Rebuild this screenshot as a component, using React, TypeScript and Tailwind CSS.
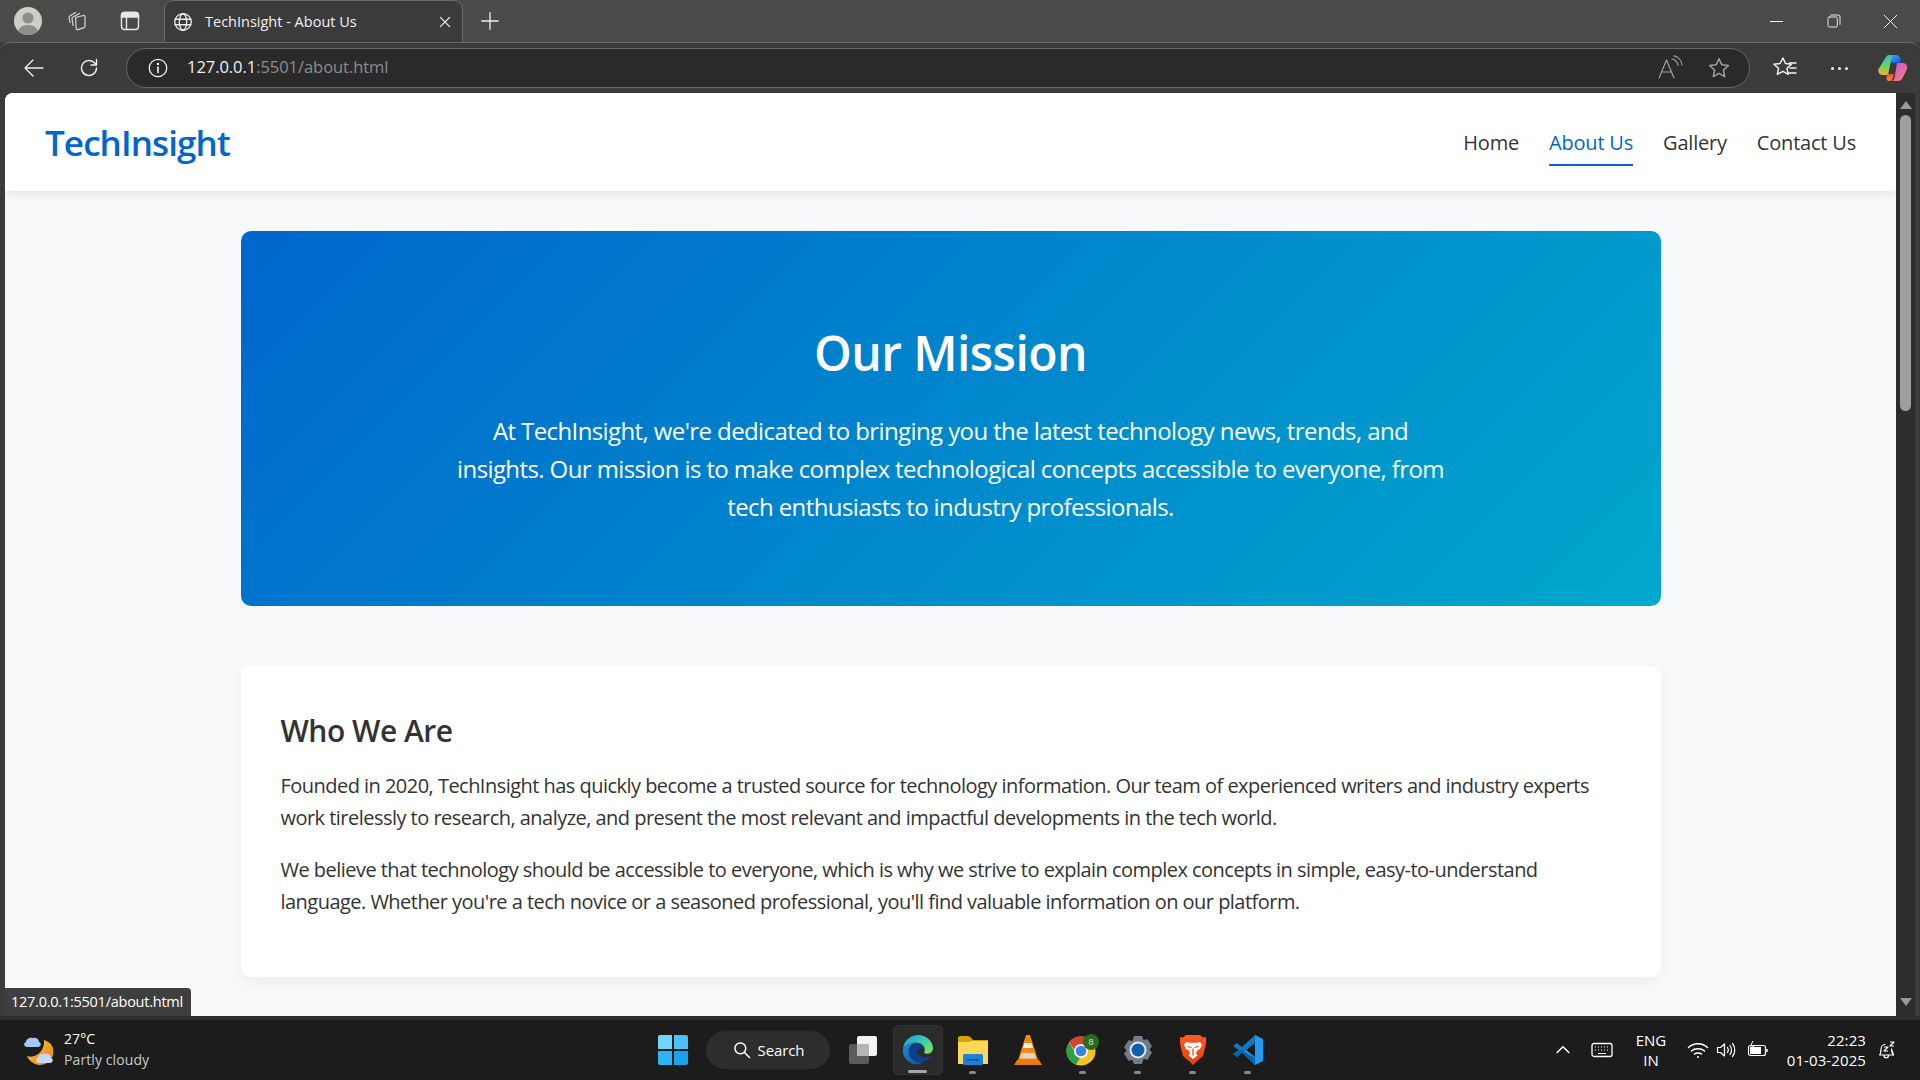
import { ReactNode } from "react";

const font = "[font-family:'Open_Sans','Noto_Sans',sans-serif]";

function Stroke({ size = 24, children, className = "" }: { size?: number; children: ReactNode; className?: string }) {
  return (
    <svg width={size} height={size} viewBox="0 0 24 24" fill="none" stroke="currentColor" strokeWidth="1.4" strokeLinecap="round" strokeLinejoin="round" className={className}>
      {children}
    </svg>
  );
}

function TabStrip() {
  return (
    <div className="flex h-[42px] items-center bg-[#4b4a48] text-[#f1f1f1]">
      <div className="ml-[14px] flex h-[28px] w-[28px] items-center justify-center overflow-hidden rounded-full bg-[#cfcdc8]">
        <svg width="28" height="28" viewBox="0 0 28 28">
          <circle cx="14" cy="11" r="5.5" fill="#8f8d89" />
          <path d="M3 28c1-8 6-10 11-10s10 2 11 10z" fill="#8f8d89" />
        </svg>
      </div>
      <div className="ml-[21px] flex w-[28px] justify-center text-[#d8d8d8]">
        <svg width="22" height="22" viewBox="0 0 22 22" fill="none" stroke="currentColor" strokeWidth="1.200" strokeLinejoin="round" strokeLinecap="round">
          <path d="M9.500 7.500 17.500 5.500c.8-.2 1.500.3 1.500 1.200v9.500c0 .7-.4 1.200-1 1.400l-6 2c-1 .3-1.800-.3-1.800-1.300z" />
          <path d="M7 15.500 6 8.500c-.1-.7.3-1.300 1-1.500L13.500 3.500" />
          <path d="M4 12.500 3 7.500c-.1-.7.2-1.200.8-1.500L9.500 2.500" />
        </svg>
      </div>
      <div className="ml-[25px] flex w-[28px] justify-center text-[#e8e8e8]">
        <svg width="22" height="22" viewBox="0 0 22 22" fill="none" stroke="currentColor" strokeWidth="1.400">
          <rect x="2.500" y="2.500" width="17" height="17" rx="3" />
          <path d="M2.500 7h17V5.500a3 3 0 0 0-3-3h-11a3 3 0 0 0-3 3z" fill="currentColor" />
          <path d="M7.500 7v12.500" />
        </svg>
      </div>
      <div className="ml-[20px] flex h-[42px] w-[299px] items-center self-end rounded-t-[9px] border border-b-0 border-[#6a6967] bg-[#3b3b3b] pl-[7px] pr-[9px]">
        <Stroke size={22}>
          <circle cx="12" cy="12" r="9" />
          <ellipse cx="12" cy="12" rx="4" ry="9" />
          <path d="M3.500 9h17M3.500 15h17" />
        </Stroke>
        <span className={`ml-[11px] flex-1 text-[14.500px] ${font}`}>TechInsight - About Us</span>
        <Stroke size={16}>
          <path d="M5 5l14 14M19 5 5 19" strokeWidth="1.800" />
        </Stroke>
      </div>
      <div className="ml-[16px]">
        <Stroke size={22}>
          <path d="M12 3v18M3 12h18" />
        </Stroke>
      </div>
      <div className="ml-auto flex items-center">
        <div className="flex w-[57px] justify-center">
          <div className="h-px w-[13px] bg-[#f1f1f1]" />
        </div>
        <div className="flex w-[57px] justify-center">
          <Stroke size={16}>
            <rect x="3" y="6" width="14" height="15" rx="2" />
            <path d="M7 3h11a3 3 0 0 1 3 3v11" />
          </Stroke>
        </div>
        <div className="mr-[1px] flex w-[57px] justify-center">
          <Stroke size={17}>
            <path d="M3 3l18 18M21 3 3 21" />
          </Stroke>
        </div>
      </div>
    </div>
  );
}

function Copilot() {
  return (
    <svg width="32" height="32" viewBox="0 0 32 32">
      <defs>
        <linearGradient id="cpa" x1="0" y1="0" x2="1" y2="1">
          <stop offset="0" stopColor="#1cc7dc" />
          <stop offset="0.550" stopColor="#2a7df0" />
          <stop offset="1" stopColor="#1a3fc4" />
        </linearGradient>
        <linearGradient id="cpb" x1="0" y1="0" x2="1" y2="1">
          <stop offset="0" stopColor="#a95ef0" />
          <stop offset="0.600" stopColor="#f0689a" />
          <stop offset="1" stopColor="#ff9a5a" />
        </linearGradient>
        <linearGradient id="cpc" x1="0" y1="0" x2="0" y2="1">
          <stop offset="0" stopColor="#2fc4c8" />
          <stop offset="0.550" stopColor="#67d45c" />
          <stop offset="1" stopColor="#f6b32c" />
        </linearGradient>
        <linearGradient id="cpd" x1="0" y1="0" x2="0" y2="1">
          <stop offset="0" stopColor="#e8542c" />
          <stop offset="1" stopColor="#f58a3c" />
        </linearGradient>
      </defs>
      <path d="M11 3h8c2 0 3.500 1 4 3l1.500 5H15z" fill="url(#cpa)" />
      <path d="M9 5c1-1.500 2-2 3-2 2 0 3 1.500 2.500 3.500L11 23H6c-3.500 0-5.500-3-4.500-6z" fill="url(#cpc)" />
      <path d="M10 22h7l-1 3c-.5 2-2 4-4 4-1.500 0-2.500-1-2.500-3z" fill="url(#cpd)" />
      <path d="M20 11h6c3 0 5 3 4 6l-3.500 7c-1 3-3 5-6 5h-7c2 0 3.500-1 4-3z" fill="url(#cpb)" />
    </svg>
  );
}

function Toolbar() {
  return (
    <div className="flex h-[51px] items-center rounded-t-[10px] border-t border-[#6a6967] bg-[#3b3b3b] text-[#f1f1f1]">
      <div className="flex w-[68px] justify-center">
        <Stroke size={24}>
          <path d="M21 12H3M11 4l-8 8 8 8" strokeWidth="1.300" />
        </Stroke>
      </div>
      <div className="flex w-[42px] justify-center">
        <Stroke size={24}>
          <path d="M19.500 12a7.500 7.500 0 1 1-2.600-5.700L19.500 9" />
          <path d="M19.500 3.500V9H14" />
        </Stroke>
      </div>
      <div className="ml-[16px] flex h-[40px] w-[1624px] items-center rounded-full border border-[#66666a] bg-[#2a2a2a] pl-[20px] pr-[17px]">
        <Stroke size={22}>
          <circle cx="12" cy="12" r="9.500" />
          <path d="M12 11v6" strokeWidth="1.800" />
          <circle cx="12" cy="7.500" r="0.600" fill="currentColor" />
        </Stroke>
        <span className={`ml-[18px] -mt-[2px] text-[16.500px] tracking-[-0.05px] ${font}`}>
          127.0.0.1<span className="text-[#8d8d8d]">:5501/about.html</span>
        </span>
        <div className="ml-auto flex items-center text-[#a0a0a0]">
          <svg width="28" height="26" viewBox="0 0 28 26" fill="none" stroke="currentColor" strokeWidth="1.200" strokeLinecap="round" strokeLinejoin="round" className="mr-[22px]">
            <path d="M3 23 10.500 5 18 23M5.500 17h10" />
            <path d="M16 4c3 .5 5.500 3 6 6.500M18 .8c4 .8 7.500 4.200 8 9" />
          </svg>
          <Stroke size={26}>
            <path d="m12 3.500 2.600 5.600 6 .7-4.500 4.100 1.200 6L12 17l-5.300 2.900 1.200-6-4.500-4.100 6-.7z" />
          </Stroke>
        </div>
      </div>
      <div className="ml-[22px] flex w-[26px] justify-center">
        <svg width="26" height="26" viewBox="0 0 26 26" fill="none" stroke="currentColor" strokeWidth="1.500" strokeLinecap="round" strokeLinejoin="round">
          <path d="m11 3 2.500 5.500 6 .7-4.500 4.100 1.200 6L11 16.300l-5.700 3 1.200-6L2 9.200l6-.7z" />
          <path d="M17.500 8H24M18 13h6M16 18h8" />
        </svg>
      </div>
      <div className="ml-[28px] flex w-[26px] items-center justify-center gap-[4px]">
        <span className="h-[3px] w-[3px] rounded-full bg-[#f1f1f1]" />
        <span className="h-[3px] w-[3px] rounded-full bg-[#f1f1f1]" />
        <span className="h-[3px] w-[3px] rounded-full bg-[#f1f1f1]" />
      </div>
      <div className="ml-[25px]">
        <Copilot />
      </div>
    </div>
  );
}

function Scrollbar() {
  return (
    <div className="flex w-[19px] flex-col items-center bg-[#2d2d2d] pt-[8px]">
      <div className="h-0 w-0 border-x-[6px] border-b-[8px] border-x-transparent border-b-[#9a9a9a]" />
      <div className="mt-[6px] h-[296px] w-[11px] rounded-full bg-[#9f9f9f]" />
      <div className="mt-auto mb-[10px] h-0 w-0 border-x-[6px] border-t-[8px] border-x-transparent border-t-[#9a9a9a]" />
    </div>
  );
}

function Page() {
  return (
    <div className={`relative flex-1 overflow-hidden rounded-tl-[8px] bg-[#f8f9fa] ${font}`}>
      <nav className="flex h-[98px] items-center justify-between bg-white pl-[40px] pr-[40px] shadow-[0_2px_10px_rgba(0,0,0,0.1)]">
        <div className="pt-[2px] text-[35px] font-semibold tracking-[-0.9px] text-[#0066cc]">TechInsight</div>
        <div className="flex gap-[30px] text-[20px] font-medium tracking-[-0.2px] text-[#333333]">
          <a className="pt-[10px] pb-[6px]">Home</a>
          <a className="border-b-2 border-[#0066cc] pt-[10px] pb-[6px] text-[#0066cc]">About Us</a>
          <a className="pt-[10px] pb-[6px]">Gallery</a>
          <a className="pt-[10px] pb-[6px]">Contact Us</a>
        </div>
      </nav>
      <main className="mx-auto mt-[40px] w-[1420px]">
        <section className="flex h-[375px] flex-col items-center rounded-[10px] bg-[linear-gradient(135deg,#0066cc,#00a8cc)] pt-[86px] text-center text-white">
          <h1 className="text-[48px] font-semibold leading-[72px] tracking-[-0.55px]">Our Mission</h1>
          <p className="mt-[23px] w-[1000px] text-[24px] leading-[38px] tracking-[-0.6px]">
            At TechInsight, we're dedicated to bringing you the latest technology news, trends, and insights. Our mission is to make complex technological concepts accessible to everyone, from tech enthusiasts to industry professionals.
          </p>
        </section>
        <section className="mt-[60px] h-[311px] rounded-[10px] bg-white px-[40px] pt-[40px] shadow-[0_5px_15px_rgba(0,0,0,0.05)]">
          <h2 className="text-[30px] font-semibold leading-[50px] tracking-[-0.5px] text-[#333333]">Who We Are</h2>
          <p className="mt-[14px] text-[20px] leading-[32px] tracking-[-0.53px] text-[#333333]">
            Founded in 2020, TechInsight has quickly become a trusted source for technology information. Our team of experienced writers and industry experts work tirelessly to research, analyze, and present the most relevant and impactful developments in the tech world.
          </p>
          <p className="mt-[20px] text-[20px] leading-[32px] tracking-[-0.53px] text-[#333333]">
            We believe that technology should be accessible to everyone, which is why we strive to explain complex concepts in simple, easy-to-understand language. Whether you're a tech novice or a seasoned professional, you'll find valuable information on our platform.
          </p>
        </section>
      </main>
      <div className="absolute bottom-0 left-0 flex h-[28px] w-[186px] items-center rounded-tr-[4px] bg-[#3f3f3f] pb-[1px] pl-[6px] text-[14.500px] tracking-[-0.25px] text-white">
        127.0.0.1:5501/about.html
      </div>
    </div>
  );
}

function Weather() {
  return (
    <svg width="36" height="36" viewBox="0 0 36 36">
      <defs>
        <linearGradient id="moon" x1="0" y1="0" x2="1" y2="1">
          <stop offset="0" stopColor="#ffc94a" />
          <stop offset="1" stopColor="#ec7d12" />
        </linearGradient>
      </defs>
      <path d="M22 8c7 2 11 8 9 15-2 8-11 12-18 9-4-2-7-5-8-8 9 3 18-5 17-16z" fill="url(#moon)" />
      <path d="M5 15c-3 0-4-4-1-5 0-3 4-5 7-4 3-1 6 1 6 4 3 1 2 5-1 5z" fill="#a6c8f4" />
      <path d="M17 31c-3 0-4-4-1-5 0-3 4-5 7-4 3-1 6 1 6 4 3 1 2 5-1 5z" fill="#c2d8f6" />
    </svg>
  );
}

function WindowsLogo() {
  return (
    <div className="grid h-[30px] w-[30px] grid-cols-2 gap-[2px]">
      <div className="rounded-tl-[2px] bg-[#6fd5fb]" />
      <div className="rounded-tr-[2px] bg-[#4cc2f8]" />
      <div className="rounded-bl-[2px] bg-[#2db4f3]" />
      <div className="rounded-br-[2px] bg-[#1ba3ea]" />
    </div>
  );
}

function TaskView() {
  return (
    <svg width="32" height="32" viewBox="0 0 32 32">
      <rect x="2" y="10" width="20" height="20" rx="2" fill="#5b5b5b" />
      <rect x="10" y="2" width="20" height="20" rx="2" fill="#f2f2f2" />
      <rect x="10" y="10" width="12" height="12" fill="#b5b5b5" />
    </svg>
  );
}

function Edge() {
  return (
    <svg width="32" height="32" viewBox="0 0 32 32">
      <defs>
        <linearGradient id="edg" x1="0" y1="0" x2="1" y2="0.600">
          <stop offset="0" stopColor="#1d9fd8" />
          <stop offset="0.600" stopColor="#36c8b0" />
          <stop offset="1" stopColor="#6fe06a" />
        </linearGradient>
        <linearGradient id="edb" x1="0" y1="0" x2="1" y2="1">
          <stop offset="0" stopColor="#1a8ee0" />
          <stop offset="1" stopColor="#0b4f9a" />
        </linearGradient>
      </defs>
      <path d="M1 15C2 6 9 1 16 1c9 0 15 7 15 13 0 5-5 7-9 5 2-4 0-9-6-10C9 8 3 11 1 15z" fill="url(#edg)" />
      <path d="M1 15c2-4 7-7 13-6-5 1-8 5-7 10 1 6 7 10 14 9-3 2-6 3-9 2C6 29 0 23 1 15z" fill="url(#edb)" />
      <path d="M14 9c-4 1-7 5-7 9 0 6 6 11 14 10 4-.7 7-3 9-6-3 1-9 3-13-1-2-2-2-4-1-5 2-2 4-2 5-1 1-3-3-7-7-6z" fill="#0c3f86" />
    </svg>
  );
}

function Files() {
  return (
    <svg width="32" height="32" viewBox="0 0 32 32">
      <path d="M1 4c0-1 1-2 2-2h8c1 0 2 .5 3 1.500L16 6h15v6H1z" fill="#d9a100" />
      <path d="M1 8h11l2-1h17v23H1z" fill="#fbd75b" />
      <rect x="6" y="20" width="20" height="11" rx="1.500" fill="#1b82d6" />
      <rect x="10" y="25" width="12" height="1.500" fill="#0d4f9e" />
    </svg>
  );
}

function Vlc() {
  return (
    <svg width="30" height="32" viewBox="0 0 30 32">
      <path d="M13 1h4l8 25H5z" fill="#f08a0c" />
      <path d="M11.500 9h7l1.500 5h-10z" fill="#ecebe6" />
      <path d="M8.500 19h13l1.500 5.500H7z" fill="#d9d6d0" />
      <path d="M4 26h22l3 5H1z" fill="#e77c0a" />
    </svg>
  );
}

function Chrome() {
  return (
    <svg width="34" height="32" viewBox="0 0 34 32">
      <circle cx="15" cy="17" r="14.500" fill="#f0c428" />
      <path d="M15 2.500A14.500 14.500 0 0 1 28 11H15a6.500 6.500 0 0 0-6.500 4.500L3 8a14.500 14.500 0 0 1 12-5.500z" fill="#d8432f" />
      <path d="M3 8.500l6 9.500 5 6-4 6.500A14.500 14.500 0 0 1 3 8.500z" fill="#2f9e48" />
      <circle cx="15" cy="17" r="7" fill="#fff" />
      <circle cx="15" cy="17" r="5.300" fill="#3b80ea" />
      <circle cx="25" cy="8" r="8" fill="#2c6a1c" />
      <text x="25" y="11" textAnchor="middle" fontSize="9" fill="#d7e8cc" fontFamily="'Liberation Sans', sans-serif">8</text>
    </svg>
  );
}

function Settings() {
  return (
    <svg width="32" height="32" viewBox="0 0 32 32">
      <path d="M12 2h8l1.500 4 4-.8 4.500 7-2.500 3.300 2.500 3.300-4.500 7-4-.8L20 30h-8l-1.500-4-4 .8-4.500-7 2.500-3.300L2 13.200l4.500-7 4 .8z" fill="#727c87" />
      <circle cx="16" cy="16" r="8.500" fill="#e2e8ef" />
      <circle cx="16" cy="16" r="6.500" fill="#0f5ea8" />
    </svg>
  );
}

function Brave() {
  return (
    <svg width="28" height="32" viewBox="0 0 28 32">
      <defs>
        <linearGradient id="brv" x1="0" y1="0" x2="0" y2="1">
          <stop offset="0" stopColor="#ff5a24" />
          <stop offset="1" stopColor="#e8400f" />
        </linearGradient>
      </defs>
      <path d="M7 1h14l3 2.500 3-.5 0 6-.7 4-2.300 9-7 6-3 3-3-3-7-6-2.300-9L1 9V3l3 .5z" fill="url(#brv)" />
      <path d="M7 8l4 .8h6L21 8l2 3-2 4-3 1.500-1 3 1.500 2L14 25l-4.500-3.500L11 19.500l-1-3L7 15l-2-4z" fill="#fff" />
      <path d="M9 12.500l3 1M19 12.500l-3 1M14 15v6" stroke="#f24e1e" strokeWidth="1.300" strokeLinecap="round" />
    </svg>
  );
}

function VsCode() {
  return (
    <svg width="32" height="32" viewBox="0 0 32 32">
      <path d="M23 1 31 5v22l-8 4-13-13 13-9.500z" fill="#1f9cf0" />
      <path d="M23 1v7.500L9.500 19 5 23 1 20l5.500-4L1 12l4-3 5 4z" fill="#1177c4" />
      <path d="M9.500 16 23 24v7L10 19 5 23 1 20l5.500-4z" fill="#0b62a8" />
      <path d="M23 9v14l-9-7z" fill="#1c1c1c" />
    </svg>
  );
}

function PinnedApp({ children, dot = true, active = false }: { children: ReactNode; dot?: boolean; active?: boolean }) {
  return (
    <div className={`relative flex h-[50px] w-[50px] mx-[2.500px] items-center justify-center rounded-[5px] ${active ? "border border-[#333333] bg-[#2b2b2b]" : ""}`}>
      {children}
      {dot && <span className={`absolute bottom-[1px] h-[3px] rounded-full ${active ? "w-[19px] bg-[#a8a8a8]" : "w-[7px] bg-[#8a8a8a]"}`} />}
    </div>
  );
}

function Taskbar() {
  return (
    <div className={`flex h-[60px] items-center bg-[#1c1c1c] text-white ${font}`}>
      <div className="flex w-[658px] items-center pl-[22px]">
        <Weather />
        <div className="-mt-[2px] ml-[6px] text-[14px] leading-[21px] tracking-[0.1px]">
          <div>27°C</div>
          <div className="text-[#c9c9c9]">Partly cloudy</div>
        </div>
      </div>
      <div className="flex w-[30px] justify-center">
        <WindowsLogo />
      </div>
      <div className="ml-[18px] flex h-[38px] w-[124px] items-center justify-center gap-[6px] rounded-full bg-[#2d2d2d] text-[15px] tracking-[-0.1px]">
        <Stroke size={20}>
          <circle cx="10" cy="10" r="6.500" strokeWidth="1.800" />
          <path d="m15 15 6 6" strokeWidth="1.800" />
        </Stroke>
        Search
      </div>
      <div className="ml-[5px] flex items-center">
        <PinnedApp dot={false}><TaskView /></PinnedApp>
        <PinnedApp active><Edge /></PinnedApp>
        <PinnedApp><Files /></PinnedApp>
        <PinnedApp dot={false}><Vlc /></PinnedApp>
        <PinnedApp><Chrome /></PinnedApp>
        <PinnedApp><Settings /></PinnedApp>
        <PinnedApp><Brave /></PinnedApp>
        <PinnedApp><VsCode /></PinnedApp>
      </div>
      <div className="ml-auto flex items-center pr-[24px]">
        <Stroke size={20}>
          <path d="m5 15 7-7 7 7" strokeWidth="1.800" />
        </Stroke>
        <div className="ml-[18px]">
          <svg width="22" height="16" viewBox="0 0 22 16" fill="none" stroke="currentColor" strokeWidth="1.300">
            <rect x="1" y="1.500" width="20" height="13" rx="2" />
            <path d="M4 5h1M7 5h1M10 5h1M13 5h1M16 5h1M4 8h1M7 8h1M10 8h1M13 8h1M16 8h1M7 11.500h8" strokeWidth="1.200" />
          </svg>
        </div>
        <div className="ml-[20px] w-[36px] text-center text-[15px] leading-[20px]">
          <div>ENG</div>
          <div>IN</div>
        </div>
        <div className="ml-[18px]">
          <svg width="22" height="18" viewBox="0 0 22 18" fill="none" stroke="currentColor" strokeWidth="1.500" strokeLinecap="round">
            <path d="M1.500 6.500c5-5 14-5 19 0M4.500 10c3-3 10-3 13 0M7.500 13c1.500-1.500 5.500-1.500 7 0" />
            <circle cx="11" cy="16" r="1" fill="currentColor" stroke="none" />
          </svg>
        </div>
        <div className="ml-[7px]">
          <svg width="22" height="18" viewBox="0 0 22 18" fill="none" stroke="currentColor" strokeWidth="1.200" strokeLinejoin="round" strokeLinecap="round">
            <path d="M1.500 6.500h3l4-3.500v12l-4-3.500h-3z" />
            <path d="M11.500 6.500c1 1.500 1 3.500 0 5M14 4.500c2 2.500 2 6.500 0 9M16.500 2.500c3 3.500 3 9.500 0 13" />
          </svg>
        </div>
        <div className="ml-[9px]">
          <svg width="22" height="18" viewBox="0 0 22 18" fill="none" stroke="currentColor" strokeWidth="1.200">
            <rect x="1.500" y="4.500" width="17" height="10" rx="2" />
            <rect x="3" y="6" width="11" height="7" fill="currentColor" stroke="none" />
            <path d="M20 8v3" strokeWidth="1.500" />
            <path d="M6 0 3.500 5H7L5 9" strokeWidth="1" />
          </svg>
        </div>
        <div className="ml-[9px] w-[88px] text-right text-[15px] leading-[20px] tracking-[0.1px]">
          <div>22:23</div>
          <div>01-03-2025</div>
        </div>
        <div className="ml-[12px]">
          <svg width="18" height="20" viewBox="0 0 18 20" fill="none" stroke="currentColor" strokeWidth="1.200" strokeLinejoin="round">
            <path d="M1.500 15c1.500-1.500 1.500-3 1.500-6 0-2.500 2-4.500 4.500-4.500M13.500 9c0 3 .5 4.500 2 6z" />
            <path d="M1.500 15h14M6 15.500c0 3 4.500 3 4.500 0" />
            <path d="M6 7h4l-4 4h4M12 2h4l-4 4h4" />
          </svg>
        </div>
      </div>
    </div>
  );
}

export default function App() {
  return (
    <div className="flex h-[1080px] w-[1920px] flex-col overflow-hidden bg-[#3b3b3b]">
      <TabStrip />
      <Toolbar />
      <div className="flex h-[923px] pl-[5px] pr-[5px]">
        <Page />
        <Scrollbar />
      </div>
      <div className="h-[4px] bg-[#2d2d2d]" />
      <Taskbar />
    </div>
  );
}
